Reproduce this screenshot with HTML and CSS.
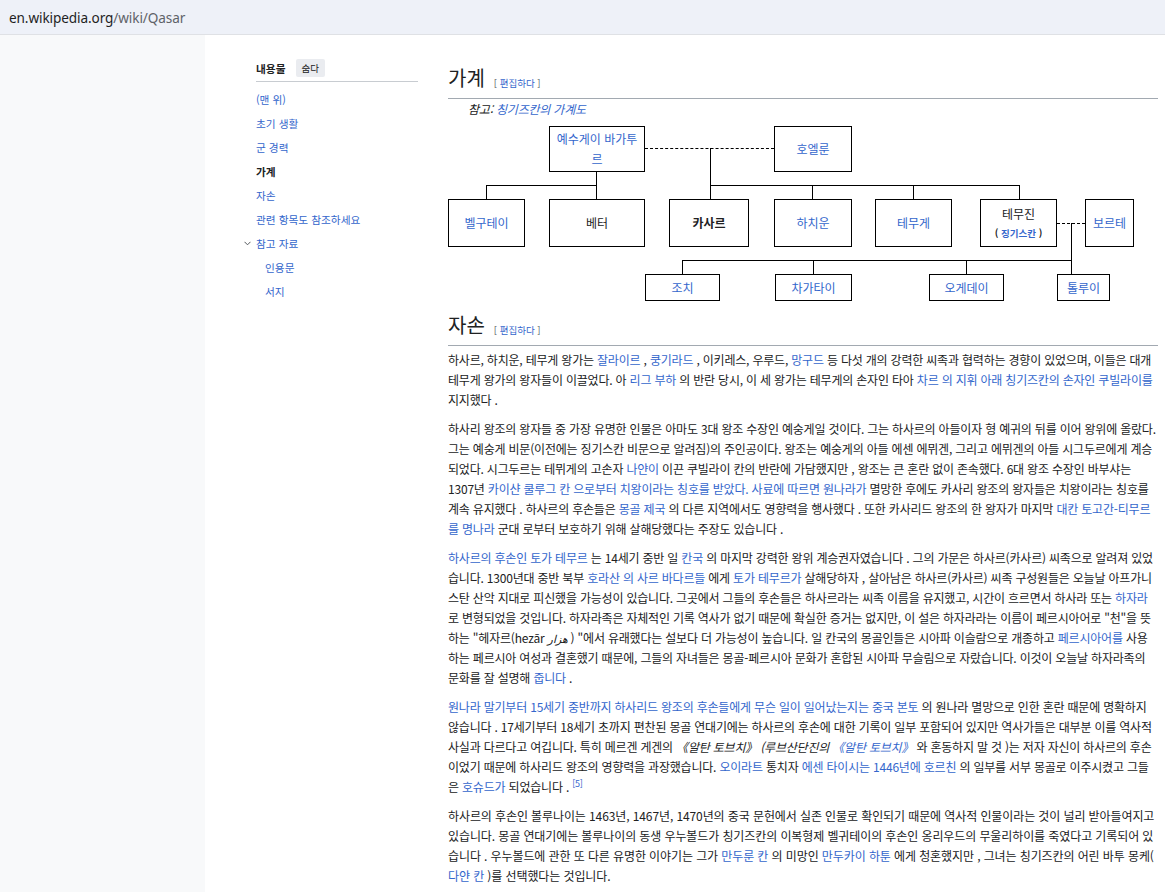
FILE: index.html
```html
<!DOCTYPE html>
<html lang="ko">
<head>
<meta charset="utf-8">
<title>카사르 - 위키백과</title>
<link rel="stylesheet" href="styles.css">
</head>
<body>
<header class="urlbar"><span class="host">en.wikipedia.org</span><span class="path">/wiki/Qasar</span></header>
<div class="page">
  <div class="rail"></div>
  <div class="main">
    <nav class="toc">
      <div class="toc-head">
        <span class="toc-title">내용물</span>
        <button class="toc-hide">숨다</button>
      </div>
      <ul class="toc-list">
        <li><a href="#">(맨 위)</a></li>
        <li><a href="#">초기 생활</a></li>
        <li><a href="#">군 경력</a></li>
        <li class="active">가계</li>
        <li><a href="#">자손</a></li>
        <li><a href="#">관련 항목도 참조하세요</a></li>
        <li class="has-sub"><svg class="chev" width="7" height="5" viewBox="0 0 7 5"><path d="M0.5 0.8 L3.5 3.8 L6.5 0.8" fill="none" stroke="#54595d" stroke-width="1"/></svg><a href="#">참고 자료</a>
          <ul class="toc-sub">
            <li><a href="#">인용문</a></li>
            <li><a href="#">서지</a></li>
          </ul>
        </li>
      </ul>
    </nav>

    <article class="content">
      <h2>가계 <span class="edit">[ <a href="#">편집하다</a> ]</span></h2>
      <p class="hatnote">참고: <a href="#">칭기즈칸의 가계도</a></p>

      <div class="tree">
        <span class="ln dash d1"></span>
        <span class="ln v v1"></span>
        <span class="ln v v-yes"></span>
        <span class="ln h bar-l"></span>
        <span class="ln v drop drop-bel"></span>
        <span class="ln h bar-r"></span>
        <span class="ln v drop drop-qas"></span>
        <span class="ln v drop drop-hac"></span>
        <span class="ln v drop drop-tem"></span>
        <span class="ln v drop drop-tmj"></span>
        <span class="ln dash d2"></span>
        <span class="ln v v2"></span>
        <span class="ln h bar3"></span>
        <span class="ln v drop3 drop-joc"></span>
        <span class="ln v drop3 drop-cha"></span>
        <span class="ln v drop3 drop-oge"></span>

        <div class="node n-yesugei"><a href="#">예수게이 바가투르</a></div>
        <div class="node n-hoelun"><a href="#">호엘룬</a></div>
        <div class="node n-belgutei"><a href="#">벨구테이</a></div>
        <div class="node n-behter">베터</div>
        <div class="node n-qasar"><b>카사르</b></div>
        <div class="node n-hachiun"><a href="#">하치운</a></div>
        <div class="node n-temuge"><a href="#">테무게</a></div>
        <div class="node n-temujin">테무진<span class="aka">( <a href="#">징기스칸</a> )</span></div>
        <div class="node n-borte"><a href="#">보르테</a></div>
        <div class="node n-jochi"><a href="#">조치</a></div>
        <div class="node n-chagatai"><a href="#">차가타이</a></div>
        <div class="node n-ogedei"><a href="#">오게데이</a></div>
        <div class="node n-tolui"><a href="#">톨루이</a></div>
      </div>

      <h2>자손 <span class="edit">[ <a href="#">편집하다</a> ]</span></h2>

      <p>하사르, 하치운, 테무게 왕가는 <a href="#">잘라이르</a> , <a href="#">쿵기라드</a> , 이키레스, 우루드, <a href="#">망구드</a> 등 다섯 개의 강력한 씨족과 협력하는 경향이 있었으며, 이들은 대개 테무게 왕가의 왕자들이 이끌었다. 아 <a href="#">리그 부하</a> 의 반란 당시, 이 세 왕가는 테무게의 손자인 타아 <a href="#">차르 의 지휘 아래 칭기즈칸의 손자인 쿠빌라이를</a> 지지했다 .</p>

      <p>하사리 왕조의 왕자들 중 가장 유명한 인물은 아마도 3대 왕조 수장인 예숭게일 것이다. 그는 하사르의 아들이자 형 예귀의 뒤를 이어 왕위에 올랐다. 그는 예숭게 비문(이전에는 징기스칸 비문으로 알려짐)의 주인공이다. 왕조는 예숭게의 아들 에센 에뮈겐, 그리고 에뮈겐의 아들 시그두르에게 계승되었다. 시그두르는 테뮈게의 고손자 <a href="#">나얀이</a> 이끈 쿠빌라이 칸의 반란에 가담했지만 , 왕조는 큰 혼란 없이 존속했다. 6대 왕조 수장인 바부샤는 1307년 <a href="#">카이샨 쿨루그 칸 으로부터 치왕이라는 칭호를 받았다. 사료에 따르면 원나라가</a> 멸망한 후에도 카사리 왕조의 왕자들은 치왕이라는 칭호를 계속 유지했다 . 하사르의 후손들은 <a href="#">몽골 제국</a> 의 다른 지역에서도 영향력을 행사했다 . 또한 카사리드 왕조의 한 왕자가 마지막 <a href="#">대칸 토고간-티무르 를 명나라</a> 군대 로부터 보호하기 위해 살해당했다는 주장도 있습니다 .</p>

      <p><a href="#">하사르의 후손인 토가 테무르</a> 는 14세기 중반 일 <a href="#">칸국</a> 의 마지막 강력한 왕위 계승권자였습니다 . 그의 가문은 하사르(카사르) 씨족으로 알려져 있었습니다. 1300년대 중반 북부 <a href="#">호라산 의 사르 바다르들</a> 에게 <a href="#">토가 테무르가</a> 살해당하자 , 살아남은 하사르(카사르) 씨족 구성원들은 오늘날 아프가니스탄 산악 지대로 피신했을 가능성이 있습니다. 그곳에서 그들의 후손들은 하사르라는 씨족 이름을 유지했고, 시간이 흐르면서 하사라 또는 <a href="#">하자라</a> 로 변형되었을 것입니다. 하자라족은 자체적인 기록 역사가 없기 때문에 확실한 증거는 없지만, 이 설은 하자라라는 이름이 페르시아어로 "천"을 뜻하는 "헤자르(hezār <span class="ar" lang="fa" dir="rtl">هزار</span> ) "에서 유래했다는 설보다 더 가능성이 높습니다. 일 칸국의 몽골인들은 시아파 이슬람으로 개종하고 <a href="#">페르시아어를</a> 사용하는 페르시아 여성과 결혼했기 때문에, 그들의 자녀들은 몽골-페르시아 문화가 혼합된 시아파 무슬림으로 자랐습니다. 이것이 오늘날 하자라족의 문화를 잘 설명해 <a href="#">줍니다</a> .</p>

      <p><a href="#">원나라 말기부터 15세기 중반까지 하사리드 왕조의 후손들에게 무슨 일이 일어났는지는 중국 본토</a> 의 원나라 멸망으로 인한 혼란 때문에 명확하지 않습니다 . 17세기부터 18세기 초까지 편찬된 몽골 연대기에는 하사르의 후손에 대한 기록이 일부 포함되어 있지만 역사가들은 대부분 이를 역사적 사실과 다르다고 여깁니다. 특히 메르겐 게겐의 <i>《알탄 토브치》 (루브산단진의</i> <i><a href="#">《알탄 토브치》</a></i> 와 혼동하지 말 것 )는 저자 자신이 하사르의 후손이었기 때문에 하사리드 왕조의 영향력을 과장했습니다. <a href="#">오이라트</a> 통치자 <a href="#">에센 타이시는 1446년에 호르친</a> 의 일부를 서부 몽골로 이주시켰고 그들은 <a href="#">호슈드가</a> 되었습니다 . <sup><a href="#">[5]</a></sup></p>

      <p>하사르의 후손인 볼루나이는 1463년, 1467년, 1470년의 중국 문헌에서 실존 인물로 확인되기 때문에 역사적 인물이라는 것이 널리 받아들여지고 있습니다. 몽골 연대기에는 볼루나이의 동생 우누볼드가 칭기즈칸의 이복형제 벨귀테이의 후손인 옹리우드의 무울리하이를 죽였다고 기록되어 있습니다 . 우누볼드에 관한 또 다른 유명한 이야기는 그가 <a href="#">만두룬 칸</a> 의 미망인 <a href="#">만두카이 하툰</a> 에게 청혼했지만 , 그녀는 칭기즈칸의 어린 바투 몽케( <a href="#">다얀 칸</a> )를 선택했다는 것입니다.</p>
    </article>
  </div>
</div>
</body>
</html>
```

FILE: styles.css
```css
html, body {
  margin: 0;
  padding: 0;
}

body {
  font-family: "Noto Sans CJK KR", "Noto Sans", sans-serif;
  color: #202122;
  background: #fff;
  overflow: hidden;
}

a {
  color: #3366cc;
  text-decoration: none;
}

/* browser address bar */
.urlbar {
  height: 35px;
  box-sizing: border-box;
  background: #eef1f8;
  border-bottom: 1px solid #dfe1e5;
  display: flex;
  align-items: center;
  padding-left: 9px;
  font-family: "Noto Sans", "Open Sans", sans-serif;
  font-size: 13.6px;
  letter-spacing: -0.1px;
}

.urlbar .host {
  color: #1f1f1f;
}

.urlbar .path {
  color: #5f6368;
}

/* page frame */
.page {
  display: flex;
  height: 857px;
}

.rail {
  width: 205px;
  flex: none;
  background: #f8f9fa;
}

.main {
  display: flex;
  gap: 30px;
  padding: 24px 0 0 51px;
}

/* table of contents */
.toc {
  width: 162px;
  flex: none;
  font-size: 10.7px;
}

.toc-head {
  display: flex;
  gap: 10px;
  height: 22px;
  align-items: flex-start;
  border-bottom: 1px solid #c8ccd1;
}

.toc-title {
  font-weight: bold;
  line-height: 19px;
}

.toc-hide {
  font-family: inherit;
  font-size: 9.5px;
  color: #202122;
  background: #eaecf0;
  border: none;
  border-radius: 2px;
  height: 18px;
  padding: 0 6px;
  line-height: 18px;
}

.toc-list,
.toc-sub {
  list-style: none;
  margin: 0;
  padding: 0;
}

.toc-list {
  padding-top: 6px;
}

.toc-list li {
  line-height: 24px;
}

.toc-list .active {
  font-weight: bold;
}

.toc-list .has-sub {
  position: relative;
}

.chev {
  position: absolute;
  left: -12px;
  top: 9px;
}

.toc-sub {
  padding-left: 9px;
}

/* article */
.content {
  width: 710px;
  padding-top: 5px;
  font-size: 12px;
  line-height: 20px;
  letter-spacing: -0.2px;
}

h2 {
  font-family: "Liberation Serif", "Noto Sans CJK KR", serif;
  font-weight: normal;
  font-size: 20px;
  line-height: 25px;
  margin: 0;
  padding: 3px 0 2px;
  border-bottom: 1px solid #a2a9b1;
  letter-spacing: 0;
}

h2 .edit {
  font-family: "Noto Sans CJK KR", sans-serif;
  font-size: 9.5px;
  color: #54595d;
  margin-left: 4px;
  vertical-align: -1px;
}

/* family tree diagram */
.tree {
  position: relative;
  height: 175px;
  margin: 7px 0 10px;
  letter-spacing: 0;
}

.ln {
  position: absolute;
  display: block;
}

.ln.h {
  height: 0;
  border-top: 1px solid #000;
}

.ln.v {
  width: 0;
  border-left: 1px solid #000;
}

.ln.dash {
  height: 0;
  border-top: 1px dashed #000;
}

.d1 { left: 197px; top: 22px; width: 129px; }
.v1 { left: 262px; top: 22px; height: 37px; }
.v-yes { left: 148px; top: 46px; height: 27px; }
.bar-l { left: 38px; top: 59px; width: 110px; }
.bar-r { left: 262px; top: 59px; width: 309px; }
.drop { top: 59px; height: 14px; }
.drop-bel { left: 38px; }
.drop-qas { left: 262px; }
.drop-hac { left: 364px; }
.drop-tem { left: 465px; }
.drop-tmj { left: 571px; }
.d2 { left: 609px; top: 97px; width: 28px; }
.v2 { left: 623px; top: 97px; height: 51px; }
.bar3 { left: 234px; top: 134px; width: 389px; }
.drop3 { top: 134px; height: 14px; }
.drop-joc { left: 234px; }
.drop-cha { left: 365px; }
.drop-oge { left: 518px; }

.node {
  position: absolute;
  box-sizing: border-box;
  border: 1px solid #000;
  background: #fff;
  display: flex;
  flex-direction: column;
  align-items: center;
  justify-content: center;
  text-align: center;
  font-size: 12px;
  line-height: 20px;
  padding: 0 6px;
}

.node .aka {
  font-size: 9.5px;
  font-weight: bold;
  line-height: 18px;
}

.n-yesugei { left: 101px; top: 0; width: 96px; height: 46px; }
.n-hoelun { left: 326px; top: 0; width: 78px; height: 46px; }
.n-belgutei { left: 0; top: 73px; width: 77px; height: 48px; }
.n-behter { left: 101px; top: 73px; width: 96px; height: 48px; }
.n-qasar { left: 221px; top: 73px; width: 80px; height: 48px; }
.n-hachiun { left: 326px; top: 73px; width: 78px; height: 48px; }
.n-temuge { left: 427px; top: 73px; width: 77px; height: 48px; }
.n-temujin { left: 532px; top: 73px; width: 77px; height: 48px; }
.n-borte { left: 637px; top: 73px; width: 49px; height: 48px; padding: 0; }
.n-jochi { left: 197px; top: 148px; width: 75px; height: 27px; }
.n-chagatai { left: 327px; top: 148px; width: 77px; height: 27px; }
.n-ogedei { left: 481px; top: 148px; width: 75px; height: 27px; }
.n-tolui { left: 609px; top: 148px; width: 53px; height: 27px; padding: 0; }

/* body paragraphs */
.content p {
  margin: 0 0 9px;
}

.content h2 + p {
  margin-top: 4px;
}

.content p:last-child {
  letter-spacing: -0.1px;
}

.content p.hatnote {
  font-style: italic;
  margin: 0;
  padding-left: 20px;
}

.ar {
  font-family: "DejaVu Sans", sans-serif;
  font-style: italic;
  font-size: 11px;
  line-height: 10px;
}

sup {
  font-size: 9px;
  line-height: 0;
  vertical-align: 5px;
}
```
